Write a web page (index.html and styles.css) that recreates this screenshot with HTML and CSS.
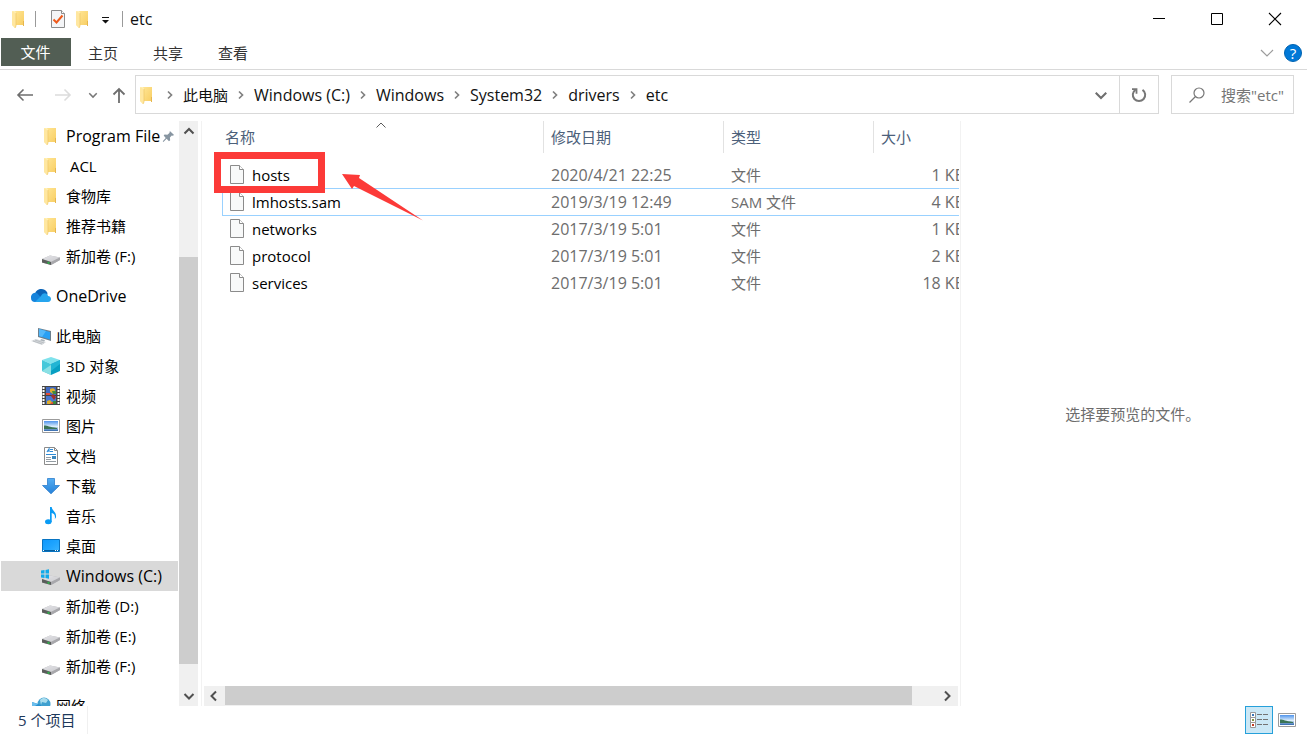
FILE: index.html
```html
<!DOCTYPE html>
<html lang="zh-CN">
<head>
<meta charset="utf-8">
<title>etc</title>
<link rel="stylesheet" href="styles.css">
</head>
<body>
<svg class="sprite" aria-hidden="true">
  <defs>
    <linearGradient id="gFold" x1="0" x2="1" y1="0" y2="1"><stop offset="0" stop-color="#ffe594"/><stop offset="1" stop-color="#f8ce63"/></linearGradient>
    <linearGradient id="gArrow" x1="0" x2="0" y1="0" y2="1"><stop offset="0" stop-color="#54aef3"/><stop offset="1" stop-color="#2680d8"/></linearGradient>
    <linearGradient id="gSky" x1="0" x2="0" y1="0" y2="1"><stop offset="0" stop-color="#4f94ec"/><stop offset=".55" stop-color="#dcedfb"/><stop offset="1" stop-color="#2c64ab"/></linearGradient>
    <linearGradient id="gDrive" x1="0" x2="1" y1="0" y2="1"><stop offset="0" stop-color="#e4e4e8"/><stop offset="1" stop-color="#cacace"/></linearGradient>
    <linearGradient id="gDesk" x1="0" x2="1" y1="0" y2="1"><stop offset="0" stop-color="#0d97fb"/><stop offset=".5" stop-color="#1ea4ff"/><stop offset="1" stop-color="#3ab4ff"/></linearGradient>
  </defs>
  <symbol id="folder" viewBox="0 0 20 20"><path d="M6 2h9v14H6z" fill="url(#gFold)"/><path d="M14 12h1v5h-1z" fill="#e6b64f"/><path d="M3 2h3l1 2v13l-1 2-3-3z" fill="#fff0b9"/><path d="M3 2.500h1.500L7 5v12l-1 2-3-3z" fill="#ffe7a0"/><path d="M7 4v13l-1 2" fill="none" stroke="#eec566" stroke-width=".7"/></symbol>
  <symbol id="drive" viewBox="0 0 20 20"><path d="M1 13 9 9.500l10 2v2.500l-9 5-9-2.500z" fill="#b2b2b6"/><path d="M1 13 9 9.500l10 2-9 4.500z" fill="url(#gDrive)"/><path d="M1 13 10 16v3l-9-2.500z" fill="#5a5d5b"/><path d="M10 16 19 11.500V14l-9 5z" fill="#a8a8ac"/><path d="M6.500 15.800h2v2h-2z" fill="#2fb44a"/></symbol>
  <symbol id="file" viewBox="0 0 16 20"><path d="M1.500 .5h9l4 4v14h-13z" fill="#f8f9f9" stroke="#8b8b8b"/><path d="M10.500 .5v4h4" fill="#fff" stroke="#8b8b8b"/></symbol>
  <symbol id="chev" viewBox="0 0 8 10"><path d="M2 1.500 5.500 5 2 8.500" fill="none" stroke="#808080" stroke-width="1.700"/></symbol>
  <symbol id="down" viewBox="0 0 12 12"><path d="M1.500 4 6 8.500 10.500 4" fill="none" stroke="currentColor" stroke-width="1.800"/></symbol>
  <symbol id="picture" viewBox="0 0 20 20"><path d="M1.500 3.500h17v13h-17z" fill="#fff" stroke="#9b9b9b"/><path d="M3 5h14v10H3z" fill="url(#gSky)"/><path d="M3 9.500c4 0 5 1.500 13 2.500v1H3z" fill="#3b7456"/></symbol>
</svg>

<div class="window">
  <header class="titlebar">
    <svg class="ico"><use href="#folder"/></svg>
    <span class="rule"></span>
    <button class="quick" aria-label="属性"><svg class="ico" viewBox="0 0 20 20"><path d="M3.500 1.500h10l3 3v14h-13z" fill="#f4f5f7" stroke="#8c8c8c"/><path d="M13.500 1.500v3h3" fill="#fff" stroke="#8c8c8c"/><path d="M5.500 10.500 8.500 13.500 14.500 6.500" fill="none" stroke="#ee5a1c" stroke-width="2"/></svg></button>
    <button class="quick" aria-label="新建文件夹"><svg class="ico"><use href="#folder"/></svg></button>
    <button class="quick" aria-label="自定义快速访问工具栏"><svg class="ico" viewBox="0 0 20 20"><path d="M7 8h7v1H7zM7 11h7l-3.500 3.500z" fill="#111"/></svg></button>
    <span class="rule"></span>
    <span class="title">etc</span>
    <div class="controls">
      <button aria-label="最小化"><svg class="ico" viewBox="0 0 20 20"><path d="M4 9.500h12" stroke="#000"/></svg></button>
      <button aria-label="最大化"><svg class="ico" viewBox="0 0 20 20"><path d="M4.500 4.500h11v11h-11z" fill="none" stroke="#000"/></svg></button>
      <button aria-label="关闭"><svg class="ico" viewBox="0 0 20 20"><path d="m4 4 12 12M16 4 4 16" stroke="#000" stroke-width="1.100"/></svg></button>
    </div>
  </header>

  <nav class="tabs">
    <button class="tab tab-file">文件</button>
    <button class="tab">主页</button>
    <button class="tab">共享</button>
    <button class="tab">查看</button>
    <div class="tabs-end">
      <button class="quick" aria-label="展开功能区"><svg class="ico-sm" viewBox="0 0 14 14"><path d="m1 4 6 6 6-6" fill="none" stroke="#9c9c9c" stroke-width="1.200"/></svg></button>
      <button class="help" aria-label="帮助">?</button>
    </div>
  </nav>

  <div class="location">
    <button class="nav-btn back" aria-label="后退"><svg class="ico" viewBox="0 0 20 20"><path d="M18 10H3M8.500 4.500 3 10l5.500 5.500" fill="none" stroke="#6e6e6e" stroke-width="1.600"/></svg></button>
    <button class="nav-btn forward" aria-label="前进"><svg class="ico" viewBox="0 0 20 20"><path d="M2 10h15M11.500 4.500 17 10l-5.500 5.500" fill="none" stroke="#dcdcdc" stroke-width="1.600"/></svg></button>
    <button class="nav-btn recent" aria-label="最近浏览的位置"><svg class="ico-xs"><use href="#down"/></svg></button>
    <button class="nav-btn up" aria-label="上移"><svg class="ico" viewBox="0 0 20 20"><path d="M10 18V4M4.500 9.500 10 4l5.500 5.500" fill="none" stroke="#6e6e6e" stroke-width="1.800"/></svg></button>
    <div class="address">
      <svg class="ico"><use href="#folder"/></svg>
      <ol class="crumbs">
        <li><svg class="chev"><use href="#chev"/></svg><a href="#">此电脑</a></li>
        <li><svg class="chev"><use href="#chev"/></svg><a class="latin" href="#">Windows (C:)</a></li>
        <li><svg class="chev"><use href="#chev"/></svg><a class="latin" href="#">Windows</a></li>
        <li><svg class="chev"><use href="#chev"/></svg><a class="latin" href="#">System32</a></li>
        <li><svg class="chev"><use href="#chev"/></svg><a class="latin" href="#">drivers</a></li>
        <li><svg class="chev"><use href="#chev"/></svg><a class="latin" href="#">etc</a></li>
      </ol>
      <button class="history" aria-label="以前的位置"><svg class="ico-sm"><use href="#down"/></svg></button>
      <button class="refresh" aria-label="刷新"><svg class="ico" viewBox="0 0 20 20"><path d="M13.500 4.800A6.200 6.200 0 1 1 6.500 4.800" fill="none" stroke="#777" stroke-width="2"/><path d="M3 4.200h4.500v4.500" fill="none" stroke="#777" stroke-width="1.800"/></svg></button>
    </div>
    <label class="search">
      <svg class="ico" viewBox="0 0 20 20"><circle cx="12" cy="8" r="5" fill="none" stroke="#777" stroke-width="1.200"/><path d="m8.500 11.500-6 6" stroke="#777" stroke-width="1.300"/></svg>
      <input type="text" aria-label="搜索" placeholder="搜索&quot;etc&quot;">
    </label>
  </div>

  <main class="body">
    <aside class="sidebar">
      <ul class="tree">
        <li class="node pinned"><svg class="ico"><use href="#folder"/></svg><span class="latin">Program File</span><svg class="pin" viewBox="0 0 14 14"><path d="m8.500 1 4.500 4.500-1.500.7-1-.2-2 2.200.3 2.800-1.300 1L5 9.500 1.500 12.800l-.7-.6L4 8.500 1.800 6l1-1.200 3 .3 2.200-2z" fill="#8795a1"/></svg></li>
        <li class="node"><svg class="ico"><use href="#folder"/></svg><span class="spaced"> ACL</span></li>
        <li class="node"><svg class="ico"><use href="#folder"/></svg><span>食物库</span></li>
        <li class="node"><svg class="ico"><use href="#folder"/></svg><span>推荐书籍</span></li>
        <li class="node"><svg class="ico"><use href="#drive"/></svg><span>新加卷 (F:)</span></li>
        <li class="node root"><svg class="ico" viewBox="0 0 20 20"><path d="M4 8c1-6 10-7 12.500-1l-1 5-10-1z" fill="#0b64b8"/><path d="M0 12c-.5-4 3-6 6-5l8 9H4c-2.500 0-4-1.500-4-4z" fill="#1684dc"/><path d="M10 10C12 6 16.500 7 17 10c4 0 4 6 0 6H4z" fill="#26a5ee"/></svg><span class="latin">OneDrive</span></li>
        <li class="node root"><svg class="ico" viewBox="0 0 20 20"><path d="m7 2 13 3v10L7 11z" fill="#6c7f8d"/><path d="m8 3 11 3v7.500L8 10z" fill="#29a0f4"/><path d="m8 3 7 2-4 6-3-1z" fill="#54b8fa"/><path d="m10 13 4 1-1 2-4-1z" fill="#a8b0b6"/><path d="m0 15 5-2 10 3-4 3z" fill="#d5d9dc"/><path d="m2 15 9 3M4 14l9 3" stroke="#a9afb4" stroke-width=".6"/></svg><span>此电脑</span></li>
        <li class="node"><svg class="ico" viewBox="0 0 20 20"><path d="m10 1 9 3-9 4-9-4z" fill="#7fe2ec"/><path d="m1 4 9 4v11l-9-4z" fill="#45c8da"/><path d="m1 15 9-6v10z" fill="#8be0e4"/><path d="m19 4-9 4v11l9-4z" fill="#079fc2"/><path d="m10 8 9-4v4l-9 7z" fill="#22b5d4"/></svg><span>3D 对象</span></li>
        <li class="node"><svg class="ico" viewBox="0 0 20 20"><path d="M1 0h18v19H1z" fill="#454545"/><path d="M5 1h10v8H5z" fill="#426ac0"/><path d="M5 10h10v8H5z" fill="#4878d0"/><path d="M2.500 1v18M17.500 1v18" stroke="#fff" stroke-width="2" stroke-dasharray="2 1"/><path d="M5 7h4v2H5zM8 16h4v2H8z" fill="#e34c36"/><path d="M9 3c3-2 6 0 5 3l-2 2-3-2zM6 15l3-1 2 2-2 2H6z" fill="#dfad2d"/><path d="M11 5h4v3h-3zM12 15h3v3h-3z" fill="#3e8b3f"/><path d="m10 10 2-2 3 3-2 3z" fill="#a82e27"/></svg><span>视频</span></li>
        <li class="node"><svg class="ico"><use href="#picture"/></svg><span>图片</span></li>
        <li class="node"><svg class="ico" viewBox="0 0 20 20"><path d="M3.500 1.500h10l3 3v14h-13z" fill="#fff" stroke="#8b8b8b"/><path d="M13.500 1.500v3h3" fill="none" stroke="#8b8b8b"/><path d="m6 6 2-3v3M9 3.500h3M9 5.500h3M5 8.500h10" fill="none" stroke="#2e8ad5" stroke-width="1.200"/><path d="M5 11.500h5M5 13.500h5M5 15.500h10" stroke="#939ca3"/><path d="M11 10h4v3h-4z" fill="#3d87bd"/></svg><span>文档</span></li>
        <li class="node"><svg class="ico" viewBox="0 0 20 20"><path d="M6.500 2.500h7v7h5L10 17.800 1.500 9.500h5z" fill="url(#gArrow)" stroke="#2d7ecd" stroke-width=".8"/></svg><span>下载</span></li>
        <li class="node"><svg class="ico" viewBox="0 0 20 20"><ellipse cx="7.300" cy="15.800" rx="3.300" ry="2.500" fill="#0a9bf4"/><path d="M9 1h1.700c.5 4 5 5 4.300 10-.2 1-.7 1.500-1.200 2 .7-4-.8-5.500-3.100-6v9H9z" fill="#0a9bf4"/></svg><span>音乐</span></li>
        <li class="node"><svg class="ico" viewBox="0 0 20 20"><path d="M1.500 3.500h17v12h-17z" fill="url(#gDesk)" stroke="#0874c2"/><path d="M2 14.500h16" stroke="#065e9e"/><path d="M2 14.500h1M14 14.500h1M16 14.500h1" stroke="#fff"/></svg><span>桌面</span></li>
        <li class="node selected"><svg class="ico" viewBox="0 0 20 20"><use href="#drive" width="20" height="20"/><path d="M0 4.500 3.500 4v3.500H0zM4.500 3.900 8 3.300v4.200H4.500zM0 8.500h3.500V12L0 11.500zM4.500 8.500H8v4.200L4.500 12z" fill="#10aaea"/></svg><span class="latin">Windows (C:)</span></li>
        <li class="node"><svg class="ico"><use href="#drive"/></svg><span>新加卷 (D:)</span></li>
        <li class="node"><svg class="ico"><use href="#drive"/></svg><span>新加卷 (E:)</span></li>
        <li class="node"><svg class="ico"><use href="#drive"/></svg><span>新加卷 (F:)</span></li>
        <li class="node root"><svg class="ico" viewBox="0 0 20 20"><circle cx="13" cy="8" r="6.500" fill="#3fa0cf"/><path d="M9 4c3-3 6-2 8 0l-2 3-4-1-1 3z" fill="#a8dced"/><path d="m1 6 9 3v8l-9-4z" fill="#258fd0"/><path d="m1 6 6 2-6 4z" fill="#6abdec"/></svg><span>网络</span></li>
      </ul>
      <div class="vbar">
        <svg class="arrow" viewBox="0 0 12 12"><path d="M1.500 8.500 6 4l4.500 4.500" fill="none" stroke="#505050" stroke-width="2"/></svg>
        <span class="gap-before"></span><span class="thumb"></span><span class="gap-after"></span>
        <svg class="arrow" viewBox="0 0 12 12"><path d="M1.500 4 6 8.500 10.500 4" fill="none" stroke="#505050" stroke-width="2"/></svg>
      </div>
    </aside>

    <section class="files">
      <div class="list">
        <table>
          <colgroup><col class="c-name"><col class="c-date"><col class="c-type"><col class="c-size"></colgroup>
          <thead><tr><th>名称</th><th>修改日期</th><th>类型</th><th>大小</th></tr></thead>
          <tbody>
            <tr><td><div class="name"><svg class="doc"><use href="#file"/></svg>hosts</div></td><td class="latin">2020/4/21 22:25</td><td>文件</td><td class="latin">1 KB</td></tr>
            <tr class="focus"><td><div class="name"><svg class="doc"><use href="#file"/></svg>lmhosts.sam</div></td><td class="latin">2019/3/19 12:49</td><td>SAM 文件</td><td class="latin">4 KB</td></tr>
            <tr><td><div class="name"><svg class="doc"><use href="#file"/></svg>networks</div></td><td class="latin">2017/3/19 5:01</td><td>文件</td><td class="latin">1 KB</td></tr>
            <tr><td><div class="name"><svg class="doc"><use href="#file"/></svg>protocol</div></td><td class="latin">2017/3/19 5:01</td><td>文件</td><td class="latin">2 KB</td></tr>
            <tr><td><div class="name"><svg class="doc"><use href="#file"/></svg>services</div></td><td class="latin">2017/3/19 5:01</td><td>文件</td><td class="latin">18 KB</td></tr>
          </tbody>
        </table>
        <svg class="sort" viewBox="0 0 10 6"><path d="M.5 5.500 5 1l4.500 4.500" fill="none" stroke="#5c5c5c"/></svg>
        <span class="mark"></span>
        <svg class="pointer" viewBox="0 0 82 48"><path d="M0 1 18 2l-1 3 64 42.500L12 13l-2 3z" fill="#fc3a38"/></svg>
      </div>
      <div class="hbar">
        <svg class="arrow" viewBox="0 0 12 12"><path d="M8 1.500 3.500 6 8 10.500" fill="none" stroke="#505050" stroke-width="2"/></svg>
        <span class="thumb"></span><span class="gap-after"></span>
        <svg class="arrow" viewBox="0 0 12 12"><path d="M4 1.500 8.500 6 4 10.500" fill="none" stroke="#505050" stroke-width="2"/></svg>
      </div>
    </section>

    <section class="preview"><p>选择要预览的文件。</p></section>
  </main>

  <footer class="status">
    <span class="count">5 个项目</span>
    <div class="views">
      <button class="view active" aria-label="详细信息"><svg class="ico" viewBox="0 0 20 20"><g fill="#fff" stroke="#999"><path d="M1.500 2.500h5v5h-5zM1.500 7.500h5v5h-5zM1.500 12.500h5v5h-5z"/></g><path d="M3 4h2v2H3z" fill="#3877b8"/><path d="M3 9h2v2H3z" fill="#81933d"/><path d="M3 14h2v2H3z" fill="#c33c23"/><path d="M8 4.500h5M14 4.500h5M8 9.500h5M14 9.500h5M8 14.500h5M14 14.500h5" stroke="#737373"/></svg></button>
      <button class="view" aria-label="大图标"><svg class="ico"><use href="#picture"/></svg></button>
    </div>
  </footer>
</div>
</body>
</html>
```
FILE: styles.css
```css
* { box-sizing: border-box; }

body {
  margin: 0;
  background: #fff;
  color: #111;
  font: 15px/20px "Open Sans", "Noto Sans CJK SC", sans-serif;
}

button {
  display: flex;
  align-items: center;
  justify-content: center;
  padding: 0;
  border: 0;
  background: none;
  color: inherit;
  font: inherit;
}

ul, ol { margin: 0; padding: 0; list-style: none; }
a { color: inherit; text-decoration: none; }
svg { display: block; flex: none; }

.sprite { position: absolute; width: 0; height: 0; }
.ico { width: 20px; height: 20px; }
.ico-sm { width: 14px; height: 14px; }
.ico-xs { width: 10px; height: 10px; }
.latin { font-size: 16px; }

.window { display: flex; flex-direction: column; height: 100vh; }

/* Title bar */
.titlebar { display: flex; align-items: center; height: 38px; padding-left: 9px; }
.rule { width: 1px; height: 16px; margin: 0 7px; background: #9a9a9a; }
.titlebar .rule:nth-of-type(1) { margin: 0 12px 0 6px; }
.titlebar .quick + .quick { margin-left: 5px; }
.titlebar .quick + .quick + .quick { margin-left: 2px; }
.title { font-size: 16px; }
.controls { display: flex; margin-left: auto; padding-right: 3px; }
.controls button { width: 58px; height: 38px; }

/* Ribbon tabs */
.tabs { display: flex; height: 32px; padding-left: 1px; border-bottom: 1px solid #d9d9d9; }
.tab { width: 65px; height: 30px; padding-right: 1px; color: #333; }
.tab-file { width: 70px; height: 28px; background: #525e54; color: #fff; }
.tabs-end { display: flex; align-items: center; gap: 10px; height: 30px; margin-left: auto; padding-right: 5px; }
.help {
  width: 18px;
  height: 18px;
  border: 1px solid #0063b1;
  border-radius: 50%;
  background: #0078d7;
  color: #fff;
  font-size: 15px;
}

/* Address row */
.location { display: flex; align-items: center; height: 49px; padding: 0 13px 0 10px; }
.nav-btn { height: 30px; color: #777; }
.back, .forward { width: 30px; }
.forward { margin-left: 8px; }
.recent { width: 18px; margin-left: 6px; }
.up { width: 22px; margin: 0 5px 0 6px; }
.address { display: flex; flex: 1; align-items: center; height: 39px; padding-left: 1px; border: 1px solid #d9d9d9; }
.crumbs { display: flex; flex: 1; }
.crumbs li { display: flex; align-items: center; }
.chev { width: 8px; height: 10px; margin: 0 9px; }
.history { width: 36px; height: 37px; color: #6e6e6e; }
.refresh { width: 39px; height: 37px; border-left: 1px solid #d9d9d9; }
.search { display: flex; align-items: center; width: 123px; height: 39px; margin-left: 12px; padding-left: 15px; border: 1px solid #d9d9d9; }
.search input { flex: 1; min-width: 0; margin-left: 14px; padding: 0; border: 0; outline: 0; font: inherit; }
.search input::placeholder { color: #767676; opacity: 1; }

/* Panes */
.body { display: flex; flex: 1; min-height: 0; padding-top: 2px; }
.sidebar { display: flex; flex: none; width: 201px; padding-left: 1px; }
.tree { flex: 1; overflow: hidden; }
.node { display: flex; align-items: center; gap: 5px; height: 30px; padding-left: 40px; color: #000; white-space: nowrap; }
.pinned .pin { margin-left: -3px; }
.root { margin-top: 10px; padding-left: 30px; }
.selected { margin-right: 1px; background: #d9d9d9; }
.spaced { white-space: pre; }
.pin { width: 13px; height: 13px; }

.vbar { display: flex; flex-direction: column; align-items: center; width: 19px; margin-left: 0; margin-right: 3px; background: #f0f0f0; }
.vbar .arrow { width: 12px; height: 12px; margin: 4px 0; }
.vbar .thumb { flex: 407; width: 19px; background: #cdcdcd; }
.vbar .gap-before { flex: 116; }
.vbar .gap-after { flex: 22; }

.files { display: flex; flex: 760 1 0; flex-direction: column; min-width: 0; padding-right: 1px; border-left: 1px solid #f2f2f2; }
.list { position: relative; flex: 1; overflow: hidden; padding-left: 20px; }
table { width: 752px; border-collapse: separate; border-spacing: 0; table-layout: fixed; }
.c-name { width: 322px; }
.c-date { width: 180px; }
.c-type { width: 150px; }
.c-size { width: 100px; }
th { height: 32px; padding: 0 7px; border-right: 1px solid #e2e2e2; color: #4c607a; font-weight: 400; text-align: left; }
th:first-child { padding-left: 3px; }
th:last-child { border-right: 0; }
td { height: 27px; padding: 0 7px; border-bottom: 1px solid transparent; color: #6d6d6d; white-space: nowrap; }
tbody tr:first-child td { height: 36px; padding-top: 8px; border-bottom-color: #99d1ff; }
.focus td { border-bottom-color: #99d1ff; }
.focus td:first-child { border-left: 1px solid #99d1ff; padding-left: 6px; }
td:last-child { padding-right: 9px; text-align: right; }
.name { display: flex; align-items: center; gap: 7px; color: #000; }
.doc { width: 16px; height: 20px; }

.sort { position: absolute; top: 1px; left: 174px; width: 10px; height: 6px; }
.mark { position: absolute; top: 31px; left: 12px; width: 111px; height: 41px; border: 7px solid #fc3a38; }
.pointer { position: absolute; top: 52px; left: 140px; width: 82px; height: 48px; }

.hbar { display: flex; align-items: center; height: 20px; margin: 0 1px 0 2px; background: #f0f0f0; }
.hbar .arrow { width: 12px; height: 12px; margin: 0 5px 0 4px; }
.hbar .thumb { flex: 689; height: 20px; border-bottom: 1px solid #f0f0f0; background: #cdcdcd; }
.hbar .gap-after { flex: 25; }

.preview { display: flex; flex: 346 1 0; align-items: center; justify-content: center; min-width: 0; padding-right: 2px; border-left: 1px solid #f2f2f2; color: #6d6d6d; }
.preview p { margin: 0; }

/* Status bar */
.status { display: flex; height: 30px; padding: 0 6px 0 18px; }
.count { height: 28px; padding-right: 12px; border-right: 1px solid #f0f0f0; color: #1e395b; line-height: 28px; }
.views { display: flex; margin-left: auto; }
.view { width: 28px; height: 28px; }
.active { border: 1px solid #26a0da; background: #cbe8f6; }
```
